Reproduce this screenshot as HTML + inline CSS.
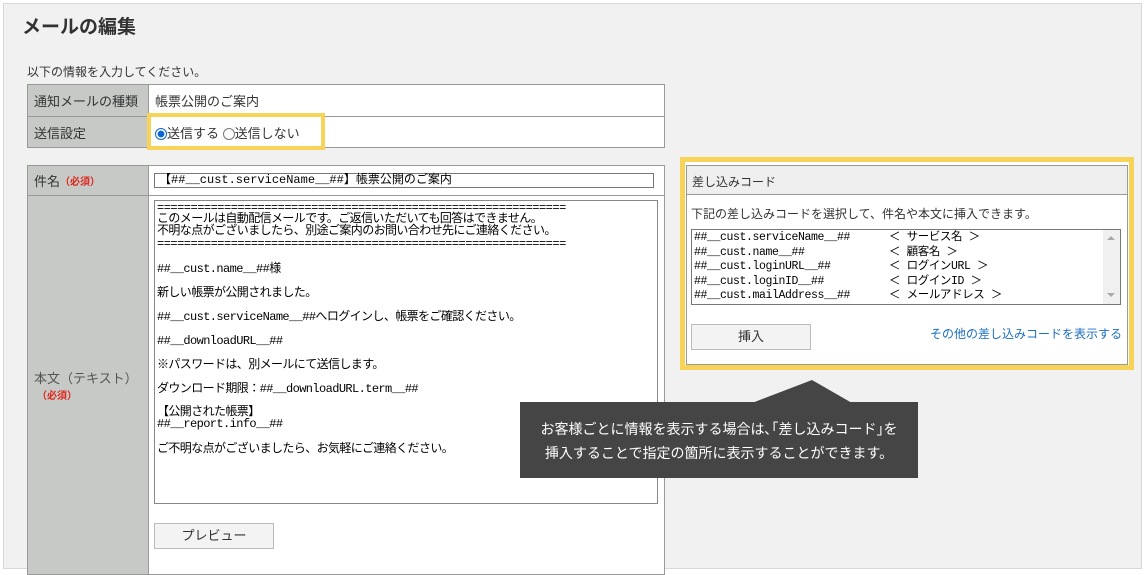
<!DOCTYPE html>
<html><head><meta charset="utf-8"><style>
*{margin:0;padding:0;box-sizing:border-box}
body{width:1148px;height:572px;background:#fff;font-family:"Liberation Sans","Noto Sans CJK JP",sans-serif;color:#333;position:relative;overflow:hidden}
.page{position:absolute;left:3px;top:3px;width:1139px;height:566px;background:#f0f1f0;border:1px solid #d8d8d8}
.abs{position:absolute}
h1{position:absolute;left:22px;top:12px;font-size:19px;font-weight:bold;color:#333}
.lbl{background:#c6c9c6;border:1px solid #999;font-size:13px;color:#333;padding-left:6px;display:flex;align-items:center}
.val{background:#fff;border:1px solid #999;font-size:13px;padding-left:6px;display:flex;align-items:center}
.mono{font-family:"Liberation Mono","Noto Sans CJK JP",monospace;font-size:12px;color:#000}
.req{color:#e0251b;font-size:10px;font-weight:bold}
.btn{position:absolute;background:#f3f3f3;border:1px solid #bbb;font-size:13px;text-align:center;color:#333}
.ta div{position:absolute;left:2px;white-space:pre;line-height:12px;letter-spacing:-0.6px}
</style></head><body>
<div class="page"></div>
<h1>メールの編集</h1>
<div class="abs" style="left:27px;top:63px;font-size:12px">以下の情報を入力してください。</div>

<div class="abs lbl" style="left:27px;top:84px;width:122px;height:33px">通知メールの種類</div>
<div class="abs val" style="left:148px;top:84px;width:517px;height:33px">帳票公開のご案内</div>
<div class="abs lbl" style="left:27px;top:116px;width:122px;height:32px">送信設定</div>
<div class="abs val" style="left:148px;top:116px;width:517px;height:32px"></div>
<div class="abs" style="left:147px;top:113px;width:178px;height:37px;border:4px solid #f7d358;background:#fff;font-size:13px;padding:6px 0 0 4px">
<span style="display:inline-block;width:12px;height:12px;border-radius:50%;border:1px solid #0a64d8;background:radial-gradient(#0a64d8 45%,#fff 50%);vertical-align:-2px"></span>送信する <span style="display:inline-block;width:12px;height:12px;border-radius:50%;border:1px solid #777;vertical-align:-2px"></span>送信しない</div>

<div class="abs lbl" style="left:27px;top:165px;width:122px;height:31px">件名 <span class="req">（必須）</span></div>
<div class="abs val" style="left:148px;top:165px;width:517px;height:31px"></div>
<div class="abs mono" style="left:154px;top:173px;width:500px;height:15px;border:1px solid #777;background:#fff;font-size:12px;line-height:13px;padding-left:4px">【##__cust.serviceName__##】帳票公開のご案内</div>
<div class="abs lbl" style="left:27px;top:195px;width:122px;height:380px;flex-direction:column;justify-content:center;align-items:flex-start"><div style="color:#555">本文（テキスト）</div><div class="req" style="margin-left:3px">（必須）</div></div>
<div class="abs val" style="left:148px;top:195px;width:517px;height:380px"></div>
<div class="abs mono ta" style="left:154px;top:200px;width:504px;height:304px;border:1px solid #888;background:#fff;overflow:hidden">
<div style="top:1px;letter-spacing:-0.5px">=============================================================</div>
<div style="top:12px">このメールは自動配信メールです。ご返信いただいても回答はできません。</div>
<div style="top:24px">不明な点がございましたら、別途ご案内のお問い合わせ先にご連絡ください。</div>
<div style="top:37px;letter-spacing:-0.5px">=============================================================</div>
<div style="top:62px">##__cust.name__##様</div>
<div style="top:86px">新しい帳票が公開されました。</div>
<div style="top:110px">##__cust.serviceName__##へログインし、帳票をご確認ください。</div>
<div style="top:134px">##__downloadURL__##</div>
<div style="top:158px">※パスワードは、別メールにて送信します。</div>
<div style="top:182px">ダウンロード期限：##__downloadURL.term__##</div>
<div style="top:205px">【公開された帳票】</div>
<div style="top:217px">##__report.info__##</div>
<div style="top:242px">ご不明な点がございましたら、お気軽にご連絡ください。</div>
</div>
<div class="btn" style="left:154px;top:523px;width:120px;height:26px;line-height:24px">プレビュー</div>

<div class="abs" style="left:680px;top:157px;width:454px;height:213px;border:5px solid #f7d358;background:#fff"></div>
<div class="abs" style="left:686px;top:165px;width:442px;height:30px;background:#efefef;border:1px solid #999;font-size:12px;padding:7px 0 0 5px">差し込みコード</div>
<div class="abs" style="left:686px;top:194px;width:442px;height:171px;border:1px solid #999;background:#fff"></div>
<div class="abs" style="left:691px;top:205px;font-size:12px">下記の差し込みコードを選択して、件名や本文に挿入できます。</div>
<div class="abs mono" style="left:691px;top:229px;width:430px;height:76px;border:1px solid #777;background:#fff;padding:1px 2px;line-height:14.5px;white-space:pre;font-size:11.5px;letter-spacing:-0.4px">##__cust.serviceName__##      ＜ サービス名 ＞
##__cust.name__##             ＜ 顧客名 ＞
##__cust.loginURL__##         ＜ ログインURL ＞
##__cust.loginID__##          ＜ ログインID ＞
##__cust.mailAddress__##      ＜ メールアドレス ＞</div>
<div class="abs" style="left:1103px;top:230px;width:17px;height:74px;background:#f0f0f0"></div>
<div class="abs" style="left:1107px;top:236px;border:4px solid transparent;border-bottom:4px solid #aaa;border-top:none"></div>
<div class="abs" style="left:1107px;top:293px;border:4px solid transparent;border-top:4px solid #aaa;border-bottom:none"></div>
<div class="btn" style="left:691px;top:324px;width:120px;height:26px;line-height:24px">挿入</div>
<div class="abs" style="left:930px;top:325px;font-size:12px;color:#1a6fc0">その他の差し込みコードを表示する</div>

<div class="abs" style="left:752px;top:380px;width:0;height:0;border-left:60px solid transparent;border-right:40px solid transparent;border-bottom:23px solid #454545"></div>
<div class="abs" style="left:520px;top:402px;width:398px;height:76px;background:#454545;color:#fff;font-size:14px;line-height:24px;text-align:center;padding-top:15px">お客様ごとに情報を表示する場合は､｢差し込みコード｣を<br>挿入することで指定の箇所に表示することができます。</div>
</body></html>
